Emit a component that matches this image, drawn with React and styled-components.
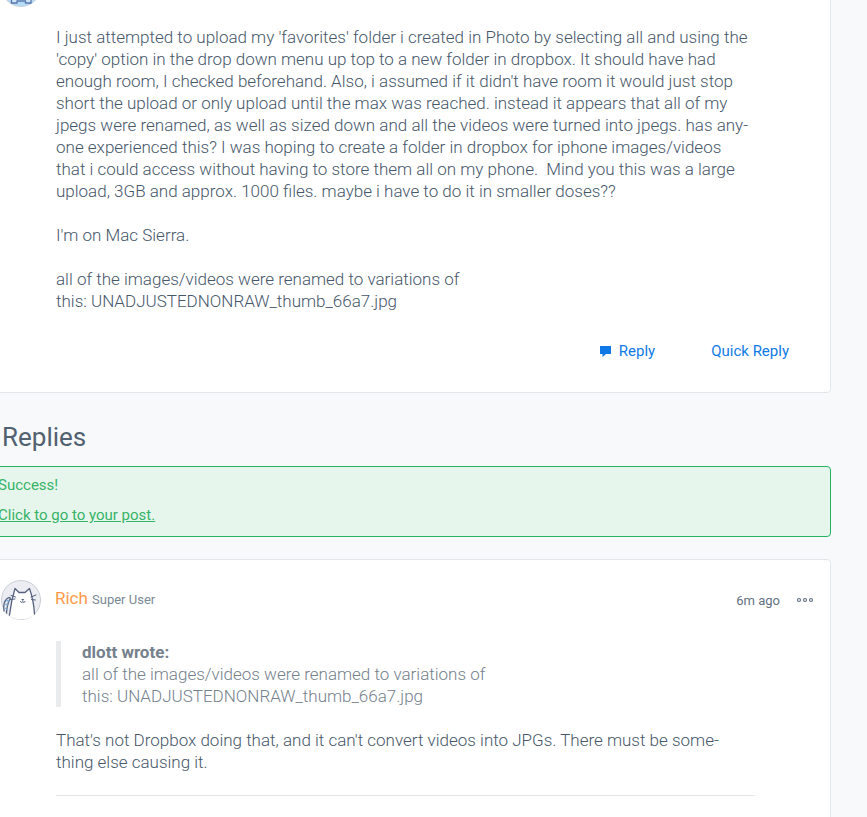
import styled, { createGlobalStyle } from "styled-components";

const App = () => {
  return (
    <>
      <GlobalStyle />
      <Page>
        <Column>
          <Card>
            <Header>
              <BearAvatar />
            </Header>
            <Body>
              <p>
                I just attempted to upload my 'favorites' folder i created in Photo by selecting all and using the<br />
                'copy' option in the drop down menu up top to a new folder in dropbox. It should have had<br />
                enough room, I checked beforehand. Also, i assumed if it didn't have room it would just stop<br />
                short the upload or only upload until the max was reached. instead it appears that all of my<br />
                jpegs were renamed, as well as sized down and all the videos were turned into jpegs. has any-<br />
                one experienced this? I was hoping to create a folder in dropbox for iphone images/videos<br />
                that i could access without having to store them all on my phone.&nbsp; Mind you this was a large<br />
                upload, 3GB and approx. 1000 files. maybe i have to do it in smaller doses??
              </p>
              <p>I'm on Mac Sierra.</p>
              <p>
                all of the images/videos were renamed to variations of<br />
                this: UNADJUSTEDNONRAW_thumb_66a7.jpg
              </p>
            </Body>
            <Actions>
              <ActionButton><ReplyIcon />Reply</ActionButton>
              <ActionButton>Quick Reply</ActionButton>
            </Actions>
          </Card>

          <Title>Replies</Title>

          <Alert role="status">
            <p>Success!</p>
            <AlertLink href="#post">Click to go to your post.</AlertLink>
          </Alert>

          <Card id="post">
            <Header>
              <CatAvatar />
              <Author>
                <AuthorLink href="#rich">Rich</AuthorLink> <Rank>Super User</Rank>
              </Author>
              <Time>6m ago</Time>
              <MenuButton aria-label="Options"><DotsIcon /></MenuButton>
            </Header>
            <Body>
              <Quote>
                <strong>dlott wrote:</strong><br />
                all of the images/videos were renamed to variations of<br />
                this: UNADJUSTEDNONRAW_thumb_66a7.jpg
              </Quote>
              <p>
                That's not Dropbox doing that, and it can't convert videos into JPGs. There must be some-<br />
                thing else causing it.
              </p>
              <Divider />
            </Body>
          </Card>
        </Column>
      </Page>
    </>
  );
};
export default App;

const BearAvatar = () => (
  <Avatar viewBox="0 0 40 40" aria-hidden="true">
    <circle cx="20" cy="20" r="19.5" fill="#b4dcf8" stroke="#c9ced6" />
    <path d="M10.500 32V36h5.500V34h8.500v2H30V32" fill="#cfe6f8" stroke="#5a78ad" strokeWidth="1.300" />
  </Avatar>
);

const CatAvatar = () => (
  <Avatar viewBox="0 0 40 40" aria-hidden="true">
    <circle cx="20" cy="20" r="19.5" fill="#ebedf2" stroke="#c9ced6" />
    <path d="M8.500 36C9.500 27 11 18 14 8.500L18.500 12.500H24L28.500 8.500C31.500 17 33 26 33.500 34.500C29.500 38 25 39.300 20 39.300C15.500 39.300 12 38.500 8.500 36Z" fill="#fff" />
    <g fill="none" stroke="#56617f" strokeWidth="1.300" strokeLinecap="round" strokeLinejoin="round">
      <path d="M8.500 35C9.500 26.500 11 18 14 8.500L18 12.500H24L28.500 8.500C31.500 17 33 26 33.500 34" />
      <path d="M10 15.500l4.500 1.500M9.500 19.500l4.500-.5M30 17l5-2M30.500 19.500l4 .5" strokeWidth="1" />
      <path d="M19.500 21.500c.2 1.300 2 1.300 2.300 0c.3 1.300 2 1.300 2.300 0" strokeWidth="1" />
      <path d="M3 31C2 25 3.500 19 8 17.500C10.500 17.500 8.500 20 7.500 22C6 25.500 6 29 5.500 33" />
      <path d="M4 24l3 1M3.500 28l2.500 1M5.500 20.500l3 .8" stroke="#7fb0d8" />
    </g>
    <path d="M20.200 19h3.200l-1.600 2z" fill="#56617f" />
  </Avatar>
);

const ReplyIcon = () => (
  <svg width="11" height="11" viewBox="0 0 11 11" fill="currentColor" aria-hidden="true">
    <path d="M0 0h11v8H6L2.500 11V8H0z" />
  </svg>
);

const DotsIcon = () => (
  <svg width="18" height="6" viewBox="0 0 18 6" fill="none" stroke="currentColor" strokeWidth="1.2" aria-hidden="true">
    <circle cx="3" cy="3" r="1.5" />
    <circle cx="9" cy="3" r="1.5" />
    <circle cx="15" cy="3" r="1.5" />
  </svg>
);

const GlobalStyle = createGlobalStyle`
  * {
    box-sizing: border-box;
  }
  html {
    background: #f7f9fb;
    overflow: hidden;
  }
  body {
    margin: 0;
    color: #47576a;
    font-family: Roboto, "Liberation Sans", sans-serif;
    font-size: 17px;
    font-weight: 300;
    line-height: 22px;
  }
  p {
    margin: 0;
  }
  button {
    padding: 0;
    border: 0;
    background: none;
    font-family: inherit;
    cursor: pointer;
  }
`;

const Page = styled.main`
  height: 100vh;
  overflow: hidden;
  padding-right: 36px;
`;

/* the thread is scrolled down and to the right, its top left corner is out of view */
const Column = styled.div`
  margin: -54px 0 0 -20px;
`;

const Card = styled.article`
  padding: 20px;
  border: 1px solid #e3e7ea;
  border-radius: 4px;
  background: #fff;
`;

const Header = styled.header`
  display: flex;
  align-items: center;
`;

const Avatar = styled.svg`
  width: 40px;
  height: 40px;
  flex-shrink: 0;
`;

const Body = styled.div`
  display: flex;
  flex-direction: column;
  gap: 22px;
  margin-top: 19px;
  padding: 0 55px;
  white-space: nowrap;
`;

const Actions = styled.div`
  display: flex;
  justify-content: flex-end;
  gap: 56px;
  padding: 28px 21px 10px;
`;

const ActionButton = styled.button`
  display: flex;
  align-items: center;
  gap: 8px;
  color: #0f7ae5;
  font-size: 15px;
  font-weight: 400;
  line-height: 22px;
`;

const Title = styled.h2`
  margin: 26px 0 11px 22px;
  color: #52616f;
  font-size: 26px;
  font-weight: 400;
  line-height: 36px;
`;

const Alert = styled.div`
  margin-bottom: 22px;
  padding: 3px 17px 6px;
  border: 1px solid #27b262;
  border-radius: 4px;
  background: #e7f6ec;
  color: #36b367;
  font-size: 15px;
  font-weight: 400;
  line-height: 30px;
`;

const AlertLink = styled.a`
  color: inherit;
`;

const Author = styled.div`
  flex: 1;
  margin-left: 14px;
  padding-bottom: 2px;
`;

const AuthorLink = styled.a`
  color: #ff9a49;
  font-weight: 400;
  text-decoration: none;
`;

const Rank = styled.span`
  color: #7b8994;
  font-size: 13px;
  font-weight: 400;
`;

const Time = styled.time`
  padding-top: 2px;
  color: #637282;
  font-size: 13px;
  font-weight: 400;
`;

const MenuButton = styled.button`
  display: flex;
  margin: 0 -4px 0 16px;
  color: #637282;
`;

const Quote = styled.blockquote`
  margin: 2px 0 0;
  padding-left: 21px;
  border-left: 5px solid #e9ebed;
  color: #75818c;

  strong {
    font-weight: 700;
  }
`;

const Divider = styled.hr`
  width: 100%;
  margin: 0 0 44px;
  border: 0;
  border-top: 1px solid #e3e7ea;
`;
